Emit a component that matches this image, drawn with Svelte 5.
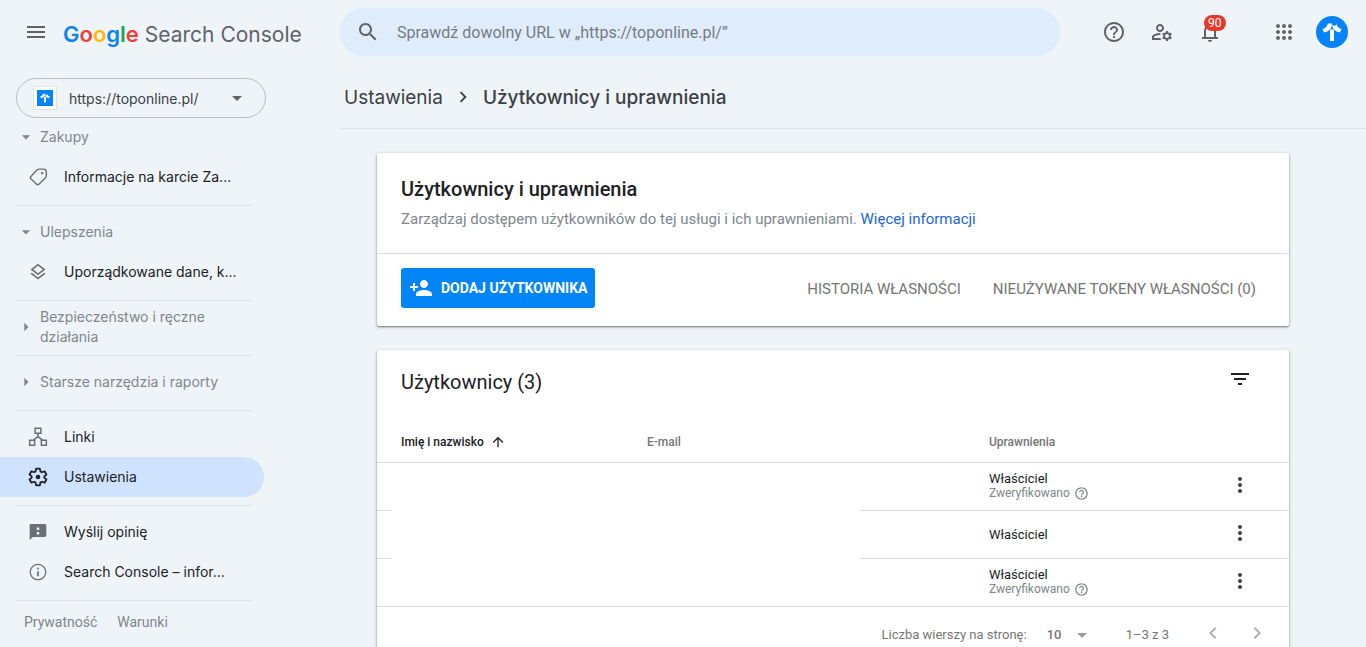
<script>
  const outline = {
    menu: 'M3 18h18v-2H3v2zm0-5h18v-2H3v2zm0-7v2h18V6H3z',
    search: 'M15.5 14h-.79l-.28-.27C15.41 12.59 16 11.11 16 9.5 16 5.91 13.09 3 9.5 3S3 5.91 3 9.5 5.91 16 9.5 16c1.61 0 3.09-.59 4.23-1.57l.27.28v.79l5 4.99L20.49 19l-4.99-5zm-6 0C7.01 14 5 11.99 5 9.5S7.01 5 9.5 5 14 7.01 14 9.5 11.99 14 9.5 14z',
    help: 'M11 18h2v-2h-2v2zm1-16C6.48 2 2 6.48 2 12s4.48 10 10 10 10-4.48 10-10S17.52 2 12 2zm0 18c-4.41 0-8-3.59-8-8s3.59-8 8-8 8 3.59 8 8-3.59 8-8 8zm0-14c-2.21 0-4 1.79-4 4h2c0-1.1.9-2 2-2s2 .9 2 2c0 2-3 1.75-3 5h2c0-2.25 3-2.5 3-5 0-2.21-1.79-4-4-4z',
    account: 'M4 18v-.65c0-.34.16-.66.41-.81C6.1 15.53 8.03 15 10 15c.03 0 .05 0 .08.01.1-.7.3-1.37.59-1.98-.22-.02-.44-.03-.67-.03-2.42 0-4.68.67-6.61 1.82-.88.52-1.39 1.5-1.39 2.53V20h9.26c-.42-.6-.75-1.28-.97-2H4zm6-6c2.21 0 4-1.79 4-4s-1.79-4-4-4-4 1.79-4 4 1.79 4 4 4zm0-6c1.1 0 2 .9 2 2s-.9 2-2 2-2-.9-2-2 .9-2 2-2zm10.75 10c0-.22-.03-.42-.06-.63l1.14-1.01-1-1.73-1.45.49c-.32-.27-.68-.48-1.08-.63L18 11h-2l-.3 1.49c-.4.15-.76.36-1.08.63l-1.45-.49-1 1.73 1.14 1.01c-.03.21-.06.41-.06.63s.03.42.06.63l-1.14 1.01 1 1.73 1.45-.49c.32.27.68.48 1.08.63L16 21h2l.3-1.49c.4-.15.76-.36 1.08-.63l1.45.49 1-1.73-1.14-1.01c.03-.21.06-.41.06-.63zM17 18c-1.1 0-2-.9-2-2s.9-2 2-2 2 .9 2 2-.9 2-2 2z',
    bell: 'M12 22c1.1 0 2-.9 2-2h-4c0 1.1.9 2 2 2zm6-5v-6c0-3.07-1.63-5.64-4.5-6.32V4c0-.83-.67-1.5-1.5-1.5s-1.5.67-1.5 1.5v.68C7.64 5.36 6 7.92 6 11v6H4v2h16v-2h-2zm-2 0H8v-6c0-2.48 1.51-4.5 4-4.5s4 2.02 4 4.5v6z',
    apps: 'M6 8a2 2 0 1 0 0-4 2 2 0 0 0 0 4zm6 0a2 2 0 1 0 0-4 2 2 0 0 0 0 4zm6 0a2 2 0 1 0 0-4 2 2 0 0 0 0 4zM6 14a2 2 0 1 0 0-4 2 2 0 0 0 0 4zm6 0a2 2 0 1 0 0-4 2 2 0 0 0 0 4zm6 0a2 2 0 1 0 0-4 2 2 0 0 0 0 4zM6 20a2 2 0 1 0 0-4 2 2 0 0 0 0 4zm6 0a2 2 0 1 0 0-4 2 2 0 0 0 0 4zm6 0a2 2 0 1 0 0-4 2 2 0 0 0 0 4z',
    down: 'M7 10l5 5 5-5z',
    right: 'M10 7l5 5-5 5z',
    chevron: 'M10 6L8.59 7.41 13.17 12l-4.58 4.59L10 18l6-6z',
    chevronLeft: 'M15.41 7.41L14 6l-6 6 6 6 1.41-1.41L10.83 12z',
    layers: 'M11.99 18.54l-7.37-5.73L3 14.07l9 7 9-7-1.63-1.27-7.38 5.74zM12 16l7.36-5.73L21 9l-9-7-9 7 1.63 1.27L12 16zm0-11.47L17.74 9 12 13.47 6.26 9 12 4.53z',
    feedback: 'M20 2.5H3.5C2.7 2.5 2 3.2 2 4v17.500l4-3.500h14c1.1 0 2-.9 2-2V4.5c0-1.1-.9-2-2-2zM13.500 15h-3v-3h3v3zm0-5.500h-3v-3h3v3z',
    info: 'M11 17h2v-6h-2v6zm1-15C6.48 2 2 6.48 2 12s4.48 10 10 10 10-4.48 10-10S17.52 2 12 2zm0 18.5c-4.69 0-8.5-3.81-8.5-8.5S7.31 3.5 12 3.5s8.5 3.81 8.5 8.5-3.81 8.5-8.5 8.5zM11 9h2V7h-2v2z',
    personAdd: 'M15 12c2.21 0 4-1.79 4-4s-1.79-4-4-4-4 1.79-4 4 1.79 4 4 4zm-9-2V7H4v3H1v2h3v3h2v-3h3v-2H6zm9 4c-2.67 0-8 1.34-8 4v2h16v-2c0-2.66-5.33-4-8-4z',
    filter: 'M10 18h4v-2h-4v2zM3 6v2h18V6H3zm3 7h12v-2H6v2z',
    up: 'M4 12l1.41 1.41L11 7.83V20h2V7.83l5.58 5.59L20 12l-8-8-8 8z',
    more: 'M12 8c1.1 0 2-.9 2-2s-.9-2-2-2-2 .9-2 2 .9 2 2 2zm0 2c-1.1 0-2 .9-2 2s.9 2 2 2 2-.9 2-2-.9-2-2-2zm0 6c-1.1 0-2 .9-2 2s.9 2 2 2 2-.9 2-2-.9-2-2-2z'
  };

  const groups = [
    { title: 'Zakupy', open: true, items: [{ label: 'Informacje na karcie Za...', icon: 'tag' }] },
    { title: 'Ulepszenia', open: true, items: [{ label: 'Uporządkowane dane, k...', icon: 'layers' }] },
    { title: 'Bezpieczeństwo i ręczne działania', open: false, items: [] },
    { title: 'Starsze narzędzia i raporty', open: false, items: [] },
    { items: [{ label: 'Linki', icon: 'links' }, { label: 'Ustawienia', icon: 'settings', active: true }] },
    { items: [{ label: 'Wyślij opinię', icon: 'feedback' }, { label: 'Search Console – infor...', icon: 'info' }] }
  ];

  const users = [
    { role: 'Właściciel', verified: true },
    { role: 'Właściciel', verified: false },
    { role: 'Właściciel', verified: true }
  ];

  let query = $state('');
  let perPage = $state('10');
</script>

{#snippet icon(name, size = 24)}
  <svg width={size} height={size} viewBox="0 0 24 24" aria-hidden="true">
    {#if name === 'settings'}
      <path d="M9.800 2h4.400l.7 3.300 1.800 1 3.200-1.100 2.200 3.800-2.500 2.200v1.600l2.500 2.200-2.200 3.800-3.200-1.100-1.800 1-.7 3.300H9.800l-.7-3.300-1.800-1-3.200 1.100-2.200-3.800 2.500-2.200v-1.600L1.900 9l2.200-3.800 3.200 1.100 1.800-1z" fill="none" stroke="currentColor" stroke-width="2.2" stroke-linejoin="round" />
      <circle cx="12" cy="12" r="2.8" fill="currentColor" />
    {:else if name === 'links'}
      <path d="M8.500 1.500h7v6h-7zM2 16h6v6H2zM16 16h6v6h-6zM12 8v3.500L6 16M12 11.500L18 16" fill="none" stroke="currentColor" stroke-width="1.800" />
    {:else if name === 'tag'}
      <path d="M13.500 2.500H19a3 3 0 0 1 3 3v5a4 4 0 0 1-1 2.500l-7.600 7.500a2.500 2.500 0 0 1-3.500 0l-6.200-6a2.500 2.500 0 0 1 0-3.500l7-7.300a4 4 0 0 1 2.800-1.200z" fill="none" stroke="currentColor" stroke-width="1.700" />
      <circle cx="17" cy="7.500" r="1.400" fill="currentColor" />
    {:else}
      <path d={outline[name]} fill="currentColor" />
    {/if}
  </svg>
{/snippet}

{#snippet arrowMark(size)}
  <svg width={size} height={size} viewBox="0 0 32 32" aria-hidden="true">
    <path d="M14 13.500h4V25h-4zM12 7.500h8v2h-8zM12 7.500h4c0 5-3 8-8 9l-1.500-3.500c3-.8 4.500-2.500 5.500-5.500zM20 7.500h-4c0 5 3 8 8 9l1.500-3.500c-3-.8-4.500-2.500-5.500-5.500z" fill="#fff" />
  </svg>
{/snippet}

<div class="app">
  <header>
    <div class="brand">
      <button class="icon-button" aria-label="Menu">{@render icon('menu')}</button>
      <a class="logo" href="#home">
        <span class="google"><span class="blue">G</span><span class="red">o</span><span class="yellow">o</span><span class="blue">g</span><span class="green">l</span><span class="red">e</span></span>
        <span>Search Console</span>
      </a>
    </div>
    <label class="search">
      {@render icon('search')}
      <input type="text" bind:value={query} aria-label="Sprawdź dowolny URL" placeholder="Sprawdź dowolny URL w „https://toponline.pl/”" />
    </label>
    <div class="tools">
      <button class="icon-button" aria-label="Pomoc">{@render icon('help')}</button>
      <button class="icon-button" aria-label="Ustawienia użytkownika">{@render icon('account')}</button>
      <button class="icon-button" aria-label="Powiadomienia">
        {@render icon('bell')}
        <span class="badge">90</span>
      </button>
      <button class="icon-button apps" aria-label="Aplikacje">{@render icon('apps')}</button>
      <button class="avatar" aria-label="Konto">{@render arrowMark(32)}</button>
    </div>
  </header>

  <div class="body">
    <aside>
      <button class="property">
        <span class="favicon"><span>{@render arrowMark(16)}</span></span>
        <span class="url">https://toponline.pl/</span>
        {@render icon('down')}
      </button>
      <nav>
        {#each groups as group}
          <div class="group">
            {#if group.title}
              <button class="heading" aria-expanded={group.open}>
                {@render icon(group.open ? 'down' : 'right', 20)}
                <span>{group.title}</span>
              </button>
            {/if}
            {#each group.items as item}
              <a class="item" class:active={item.active} href="#{item.icon}">
                {@render icon(item.icon, 20)}
                <span>{item.label}</span>
              </a>
            {/each}
          </div>
        {/each}
      </nav>
      <div class="legal">
        <a href="#privacy">Prywatność</a>
        <a href="#terms">Warunki</a>
      </div>
    </aside>

    <main>
      <div class="crumbs">
        <a href="#settings">Ustawienia</a>
        {@render icon('chevron', 22)}
        <h1>Użytkownicy i uprawnienia</h1>
      </div>

      <div class="cards">
        <section class="card">
          <div class="intro">
            <h2>Użytkownicy i uprawnienia</h2>
            <p>Zarządzaj dostępem użytkowników do tej usługi i ich uprawnieniami. <a href="#more">Więcej informacji</a></p>
          </div>
          <div class="actions">
            <button class="add">{@render icon('personAdd')}<span>DODAJ UŻYTKOWNIKA</span></button>
            <button class="flat">HISTORIA WŁASNOŚCI</button>
            <button class="flat">NIEUŻYWANE TOKENY WŁASNOŚCI (0)</button>
          </div>
        </section>

        <section class="card">
          <div class="table-title">
            <h2>Użytkownicy (3)</h2>
            <button class="icon-button" aria-label="Filtruj">{@render icon('filter')}</button>
          </div>
          <div class="table-wrap">
            <table>
              <thead>
                <tr>
                  <th class="name sorted"><span>Imię i nazwisko {@render icon('up', 16)}</span></th>
                  <th class="email">E-mail</th>
                  <th>Uprawnienia</th>
                  <th class="menu" aria-label="Opcje"></th>
                </tr>
              </thead>
              <tbody>
                {#each users as user}
                  <tr>
                    <td></td>
                    <td></td>
                    <td>
                      <div>{user.role}</div>
                      {#if user.verified}
                        <div class="verified">Zweryfikowano {@render icon('help', 15)}</div>
                      {/if}
                    </td>
                    <td class="menu"><button class="icon-button" aria-label="Więcej">{@render icon('more')}</button></td>
                  </tr>
                {/each}
              </tbody>
            </table>
            <div class="cover"></div>
          </div>
          <div class="pager">
            <label for="per-page">Liczba wierszy na stronę:</label>
            <span class="select">
              <select id="per-page" bind:value={perPage}>
                <option>10</option>
                <option>25</option>
                <option>50</option>
              </select>
              {@render icon('down')}
            </span>
            <span class="range">1–3 z 3</span>
            <button class="icon-button" aria-label="Poprzednia strona">{@render icon('chevronLeft')}</button>
            <button class="icon-button" aria-label="Następna strona">{@render icon('chevron')}</button>
          </div>
        </section>
      </div>
    </main>
  </div>
</div>

<style>
  :global(body) {
    background: #eff4f9;
  }

  .app {
    display: flex;
    flex-direction: column;
    height: 100vh;
    overflow: hidden;
    color: #202124;
    font-family: Roboto, sans-serif;
    font-size: 14px;
  }

  h1,
  h2,
  p {
    margin: 0;
  }

  a {
    color: inherit;
    text-decoration: none;
  }

  button {
    border: 0;
    padding: 0;
    background: none;
    color: inherit;
    font: inherit;
    cursor: pointer;
  }

  svg {
    display: block;
    flex: none;
  }

  header {
    display: flex;
    align-items: center;
    flex: none;
    height: 64px;
    padding-right: 18px;
    color: #5f6368;
  }

  .brand {
    display: flex;
    align-items: center;
    flex: 0 0 328px;
    padding-left: 12px;
  }

  .icon-button {
    display: flex;
    align-items: center;
    justify-content: center;
    position: relative;
    width: 48px;
    height: 48px;
  }

  .logo {
    display: flex;
    align-items: baseline;
    gap: 6px;
    margin: 3px 0 0 3px;
    font-family: Inter, sans-serif;
    font-size: 21px;
    white-space: nowrap;
  }

  .google {
    font-size: 22px;
    font-weight: 600;
  }

  .blue { color: #0a84f0; }
  .red { color: #ea4335; }
  .yellow { color: #fbbc04; }
  .green { color: #1aa260; }

  .search {
    display: flex;
    align-items: center;
    flex: 0 1 720px;
    gap: 17px;
    box-sizing: border-box;
    height: 48px;
    padding: 0 16px;
    border-radius: 24px;
    background: #dfecfb;
  }

  .search input {
    flex: 1;
    min-width: 0;
    border: 0;
    outline: 0;
    padding: 0;
    background: none;
    font: inherit;
    font-size: 16px;
  }

  .search input::placeholder {
    color: #757b82;
    opacity: 1;
  }

  .tools {
    display: flex;
    align-items: center;
    margin-left: auto;
  }

  .badge {
    position: absolute;
    top: 7px;
    left: 18px;
    padding: 0 4px;
    border-radius: 8px;
    background: #e8372c;
    color: #fff;
    font-size: 12px;
    line-height: 16px;
  }

  .apps {
    margin: 0 8px 0 26px;
  }

  .avatar {
    border-radius: 50%;
    background: #0583fb;
  }

  .body {
    display: flex;
    flex: 1;
    min-height: 0;
  }

  aside {
    flex: 0 0 266px;
    padding: 14px 74px 0 0;
    font-family: Inter, sans-serif;
  }

  .property {
    display: flex;
    align-items: center;
    box-sizing: border-box;
    width: 250px;
    height: 40px;
    margin: 0 0 -7px 16px;
    padding: 0 16px;
    border: 1px solid #b9bec3;
    border-radius: 20px;
    color: #3c4043;
  }

  .property > :global(svg) {
    color: #5f6368;
  }

  .favicon {
    display: flex;
    align-items: center;
    justify-content: center;
    width: 22px;
    height: 22px;
    border: 1px solid #e0e3e6;
    background: #fff;
  }

  .favicon span {
    background: #0583fb;
  }

  .url {
    flex: 1;
    margin-left: 12px;
    text-align: left;
  }

  .group {
    padding: 6px 0 8px;
    position: relative;
    margin-bottom: 1px;
  }

  /* divider is shorter than the rows above it */
  .group::after {
    content: '';
    position: absolute;
    left: 16px;
    right: 14px;
    bottom: -1px;
    height: 1px;
    background: #dde1e5;
  }

  .heading {
    display: flex;
    align-items: center;
    gap: 4px;
    min-height: 40px;
    padding: 0 44px 0 16px;
    color: #80868b;
    line-height: 20px;
    text-align: left;
  }

  .item {
    display: flex;
    align-items: center;
    gap: 16px;
    height: 40px;
    margin-right: 2px;
    padding-left: 28px;
    border-radius: 0 20px 20px 0;
    line-height: 20px;
    white-space: nowrap;
  }

  .item :global(svg) {
    color: #6b7075;
  }

  .active {
    background: #cfe3fe;
  }

  .active :global(svg) {
    color: #202124;
  }

  .legal {
    display: flex;
    gap: 20px;
    padding: 12px 24px;
    color: #80868b;
    font-family: Roboto, sans-serif;
    line-height: 18px;
  }

  main {
    flex: 1;
    min-width: 0;
  }

  .crumbs {
    display: flex;
    align-items: center;
    gap: 9px;
    box-sizing: border-box;
    height: 65px;
    padding: 2px 0 0 4px;
    border-bottom: 1px solid #dde1e5;
    color: #3c4043;
    font-family: Inter, sans-serif;
    font-size: 19px;
  }

  .crumbs h1 {
    font-size: 19px;
    font-weight: 500;
  }

  .cards {
    display: flex;
    flex-direction: column;
    gap: 24px;
    padding: 24px 77px 0 37px;
  }

  .card {
    border-radius: 2px;
    background: #fff;
    box-shadow: 0 1px 2px rgba(0, 0, 0, 0.45), 0 1px 4px rgba(0, 0, 0, 0.15);
  }

  .intro {
    padding: 24px;
    border-bottom: 1px solid #dadce0;
  }

  .intro h2 {
    font-size: 20px;
    font-weight: 500;
    line-height: 24px;
  }

  .intro p {
    margin-top: 8px;
    color: #80868b;
    font-size: 15px;
    line-height: 20px;
  }

  .intro a {
    color: #1a67d9;
  }

  .actions {
    display: flex;
    align-items: center;
    gap: 32px;
    padding: 14px 33px 18px 24px;
  }

  .add {
    display: flex;
    align-items: center;
    gap: 8px;
    height: 40px;
    margin-right: auto;
    padding: 0 8px;
    border-radius: 3px;
    background: #0285f7;
    color: #fff;
    font-weight: 700;
  }

  .flat {
    padding-top: 2px;
    color: #757575;
    font-size: 15px;
  }

  .table-title {
    display: flex;
    align-items: center;
    justify-content: space-between;
    height: 64px;
    padding: 0 25px 0 24px;
  }

  .table-title h2 {
    font-size: 20px;
    font-weight: 400;
  }

  .table-title .icon-button {
    align-self: flex-start;
    height: 58px;
  }

  .table-wrap {
    position: relative;
  }

  table {
    width: 100%;
    border-collapse: collapse;
    table-layout: fixed;
    font-size: 13px;
  }

  th,
  td {
    padding: 0;
    border-bottom: 1px solid #dadce0;
    text-align: left;
  }

  th {
    height: 48px;
    padding-top: 8px;
    box-sizing: border-box;
    color: #757575;
    font-size: 12px;
    font-weight: 500;
  }

  td {
    height: 47px;
    line-height: 15px;
  }

  .name {
    width: 29.6%;
    padding-left: 24px;
  }

  .name span {
    display: flex;
    align-items: center;
    gap: 6px;
  }

  .email {
    width: 37.5%;
  }

  .menu {
    width: 98px;
  }

  .menu .icon-button {
    width: 100%;
    height: 44px;
    padding-bottom: 2px;
    color: #3c4043;
  }

  .sorted {
    color: #202124;
  }

  .verified {
    display: flex;
    align-items: center;
    gap: 4px;
    color: #80868b;
    font-size: 12px;
  }

  .cover {
    position: absolute;
    left: 14px;
    bottom: 1px;
    width: 51.4%;
    height: 143px;
    background: #fff;
  }

  .pager {
    display: flex;
    align-items: center;
    justify-content: flex-end;
    height: 56px;
    padding-right: 10px;
    color: #757575;
    font-size: 13px;
  }

  .pager .icon-button {
    width: 44px;
    padding-bottom: 4px;
    color: #b0b3b6;
  }

  .select {
    display: flex;
    align-items: center;
    margin: 0 32px 0 20px;
  }

  .select :global(svg) {
    color: #9a9da0;
  }

  select {
    appearance: none;
    width: 23px;
    border: 0;
    padding: 0;
    background: none;
    color: inherit;
    font: inherit;
    font-weight: 500;
  }

  .range {
    margin-right: 22px;
  }
</style>
